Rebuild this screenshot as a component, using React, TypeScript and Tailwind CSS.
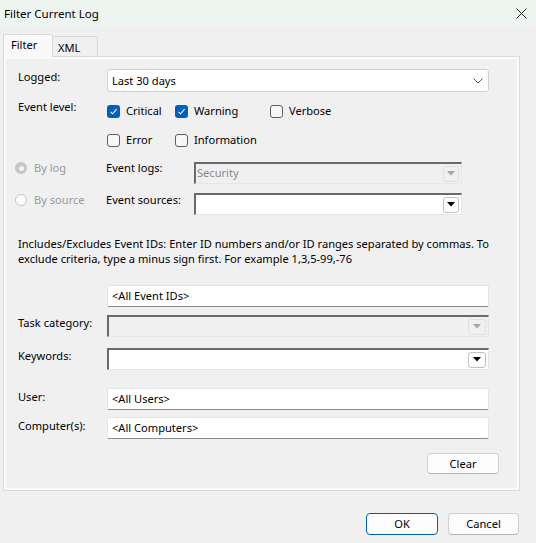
import React from 'react';

const font = { fontFamily: '"Noto Sans", "Open Sans", sans-serif' };

function Check({ checked }: { checked?: boolean }) {
  if (checked) {
    return (
      <span className="w-[13px] h-[13px] rounded-[3px] bg-[#005fb8] flex items-center justify-center shrink-0">
        <svg width="9" height="9" viewBox="0 0 9 9">
          <path d="M1.5 4.8 L3.6 6.8 L7.6 2.2" stroke="#fff" strokeWidth="1.1" fill="none" />
        </svg>
      </span>
    );
  }
  return <span className="w-[13px] h-[13px] rounded-[3px] border border-[#5f5f5f] bg-[#f7f7f7] shrink-0" />;
}

function CheckItem({ label, checked, w }: { label: string; checked?: boolean; w: string }) {
  return (
    <div className={`flex items-center gap-[6px] h-[16px] ${w}`}>
      <Check checked={checked} />
      <span className="leading-[16px]">{label}</span>
    </div>
  );
}

function Radio({ checked }: { checked?: boolean }) {
  if (checked) {
    return (
      <span className="w-[12px] h-[12px] rounded-full bg-[#c5c5c5] flex items-center justify-center shrink-0">
        <span className="w-[5px] h-[5px] rounded-full bg-[#f3f3f3]" />
      </span>
    );
  }
  return <span className="w-[12px] h-[12px] rounded-full border border-[#c8c8c8] bg-[#fafafa] shrink-0" />;
}

function OldCombo({ w, disabled, text, btnW = 'w-[16px]' }: { w: string; disabled?: boolean; text?: string; btnW?: string }) {
  return (
    <div
      className={`${w} h-[22px] flex items-center justify-between border-t-2 border-l-2 border-t-[#6a6a6a] border-l-[#6a6a6a] border-r border-b border-r-[#e6e6e6] border-b-[#e6e6e6] ${disabled ? 'bg-[#f0f0f0]' : 'bg-white'}`}
    >
      <span className="pl-[1px] leading-[16px] -mt-[2px] text-[#8a8a8a]">{text}</span>
      <span
        className={`${btnW} h-[16px] mr-[2px] rounded-[3px] border flex items-center justify-center ${disabled ? 'border-[#e0e0e0] bg-[#f0f0f0]' : 'border-[#c2c2c2] bg-[#fdfdfd]'}`}
      >
        <svg width="8" height="5" viewBox="0 0 8 5">
          <path d="M0 0 H8 L4 4.5 Z" fill={disabled ? '#a6a6a6' : '#000'} />
        </svg>
      </span>
    </div>
  );
}

function TextBox({ value }: { value: string }) {
  return (
    <div className="w-[382px] h-[22px] bg-white border border-[#e5e5e5] border-b-[#8a8a8a] rounded-[2px] flex items-center pl-[4px]">
      <span className="leading-[16px]">{value}</span>
    </div>
  );
}

export default function App() {
  return (
    <div style={font} className="w-[536px] h-[543px] bg-[#f0f0f0] text-[11.1px] text-black overflow-hidden">
      <div className="h-[27px] bg-[#eef5f1] flex items-center justify-between pl-[4px] pr-[9px]">
        <span className="leading-[16px] text-[11.5px]">Filter Current Log</span>
        <svg width="11" height="11" viewBox="0 0 11 11">
          <path d="M0.5 0.5 L10.5 10.5 M10.5 0.5 L0.5 10.5" stroke="#222" strokeWidth="1" />
        </svg>
      </div>

      <div className="flex items-end pl-[3px] h-[29px]">
        <div className="w-[50px] h-[23px] bg-[#f9f9f9] border border-b-0 border-[#d9d9d9] pl-[7px] pt-[2px] leading-[16px] relative top-[1px]">
          Filter
        </div>
        <div className="w-[45px] h-[20px] bg-[#f0f0f0] border border-l-0 border-b-0 border-[#d9d9d9] pl-[5px] pt-[3px] leading-[16px]">
          XML
        </div>
      </div>

      <div className="ml-[3px] w-[517px] h-[435px] border border-[#d9d9d9]">
        <div className="w-full h-full border-2 border-[#fafafa] flex flex-col pt-[10px]">
          <div className="flex pl-[12px]">
            <div className="w-[89px] leading-[16px]">Logged:</div>
            <div className="w-[382px] h-[23px] bg-white border border-[#d0d0d0] rounded-[3px] flex items-center justify-between pl-[4px] pr-[5px]">
              <span className="leading-[16px]">Last 30 days</span>
              <svg width="10" height="6" viewBox="0 0 10 6">
                <path d="M0.5 0.5 L5 5 L9.5 0.5" stroke="#555" strokeWidth="1" fill="none" />
              </svg>
            </div>
          </div>

          <div className="flex pl-[12px] mt-[7px]">
            <div className="w-[89px] leading-[16px]">Event level:</div>
            <div className="flex flex-col pt-[4px] gap-[13px]">
              <div className="flex">
                <CheckItem label="Critical" checked w="w-[68px]" />
                <CheckItem label="Warning" checked w="w-[95px]" />
                <CheckItem label="Verbose" w="w-[80px]" />
              </div>
              <div className="flex">
                <CheckItem label="Error" w="w-[68px]" />
                <CheckItem label="Information" w="w-[95px]" />
              </div>
            </div>
          </div>

          <div className="flex pl-[9px] mt-[12px] h-[24px]">
            <div className="w-[91px] flex items-center gap-[7px] h-[16px] text-[#9a9a9a]">
              <Radio checked />
              <span className="leading-[16px]">By log</span>
            </div>
            <div className="w-[88px] leading-[16px]">Event logs:</div>
            <div className="mt-[2px]">
              <OldCombo w="w-[268px]" disabled text="Security" />
            </div>
          </div>

          <div className="flex pl-[9px] mt-[8px] h-[24px]">
            <div className="w-[91px] flex items-center gap-[7px] h-[16px] text-[#9a9a9a]">
              <Radio />
              <span className="leading-[16px]">By source</span>
            </div>
            <div className="w-[88px] leading-[16px]">Event sources:</div>
            <div className="mt-[1px]">
              <OldCombo w="w-[268px]" />
            </div>
          </div>

          <div className="pl-[12px] mt-[20px] whitespace-nowrap flex flex-col">
            <span className="leading-[15px] h-[15px]">
              Includes/Excludes Event IDs: Enter ID numbers and/or ID ranges separated by commas. To
            </span>
            <span className="leading-[15px] h-[15px]">exclude criteria, type a minus sign first. For example 1,3,5-99,-76</span>
          </div>

          <div className="pl-[101px] mt-[19px]">
            <TextBox value="<All Event IDs>" />
          </div>

          <div className="flex pl-[12px] mt-[8px]">
            <div className="w-[89px] leading-[16px]">Task category:</div>
            <OldCombo w="w-[382px]" disabled btnW="w-[18px]" />
          </div>

          <div className="flex pl-[12px] mt-[11px]">
            <div className="w-[89px] leading-[16px]">Keywords:</div>
            <OldCombo w="w-[382px]" btnW="w-[18px]" />
          </div>

          <div className="flex pl-[12px] mt-[18px]">
            <div className="w-[89px] leading-[16px] pt-[1px]">User:</div>
            <TextBox value="<All Users>" />
          </div>

          <div className="flex pl-[12px] mt-[7px]">
            <div className="w-[89px] leading-[16px] pt-[1px]">Computer(s):</div>
            <TextBox value="<All Computers>" />
          </div>

          <div className="flex justify-end pr-[18px] mt-[14px]">
            <button className="w-[72px] h-[21px] bg-[#fdfdfd] border border-[#d0d0d0] border-b-[#b5b5b5] rounded-[4px] leading-[16px]">
              Clear
            </button>
          </div>
        </div>
      </div>

      <div className="flex justify-end gap-[10px] pr-[17px] mt-[22px]">
        <button className="w-[72px] h-[22px] bg-[#fdfdfd] border border-[#005fb8] rounded-[4px] leading-[16px]">OK</button>
        <button className="w-[71px] h-[22px] bg-[#fdfdfd] border border-[#d0d0d0] border-b-[#b5b5b5] rounded-[4px] leading-[16px]">
          Cancel
        </button>
      </div>
    </div>
  );
}
